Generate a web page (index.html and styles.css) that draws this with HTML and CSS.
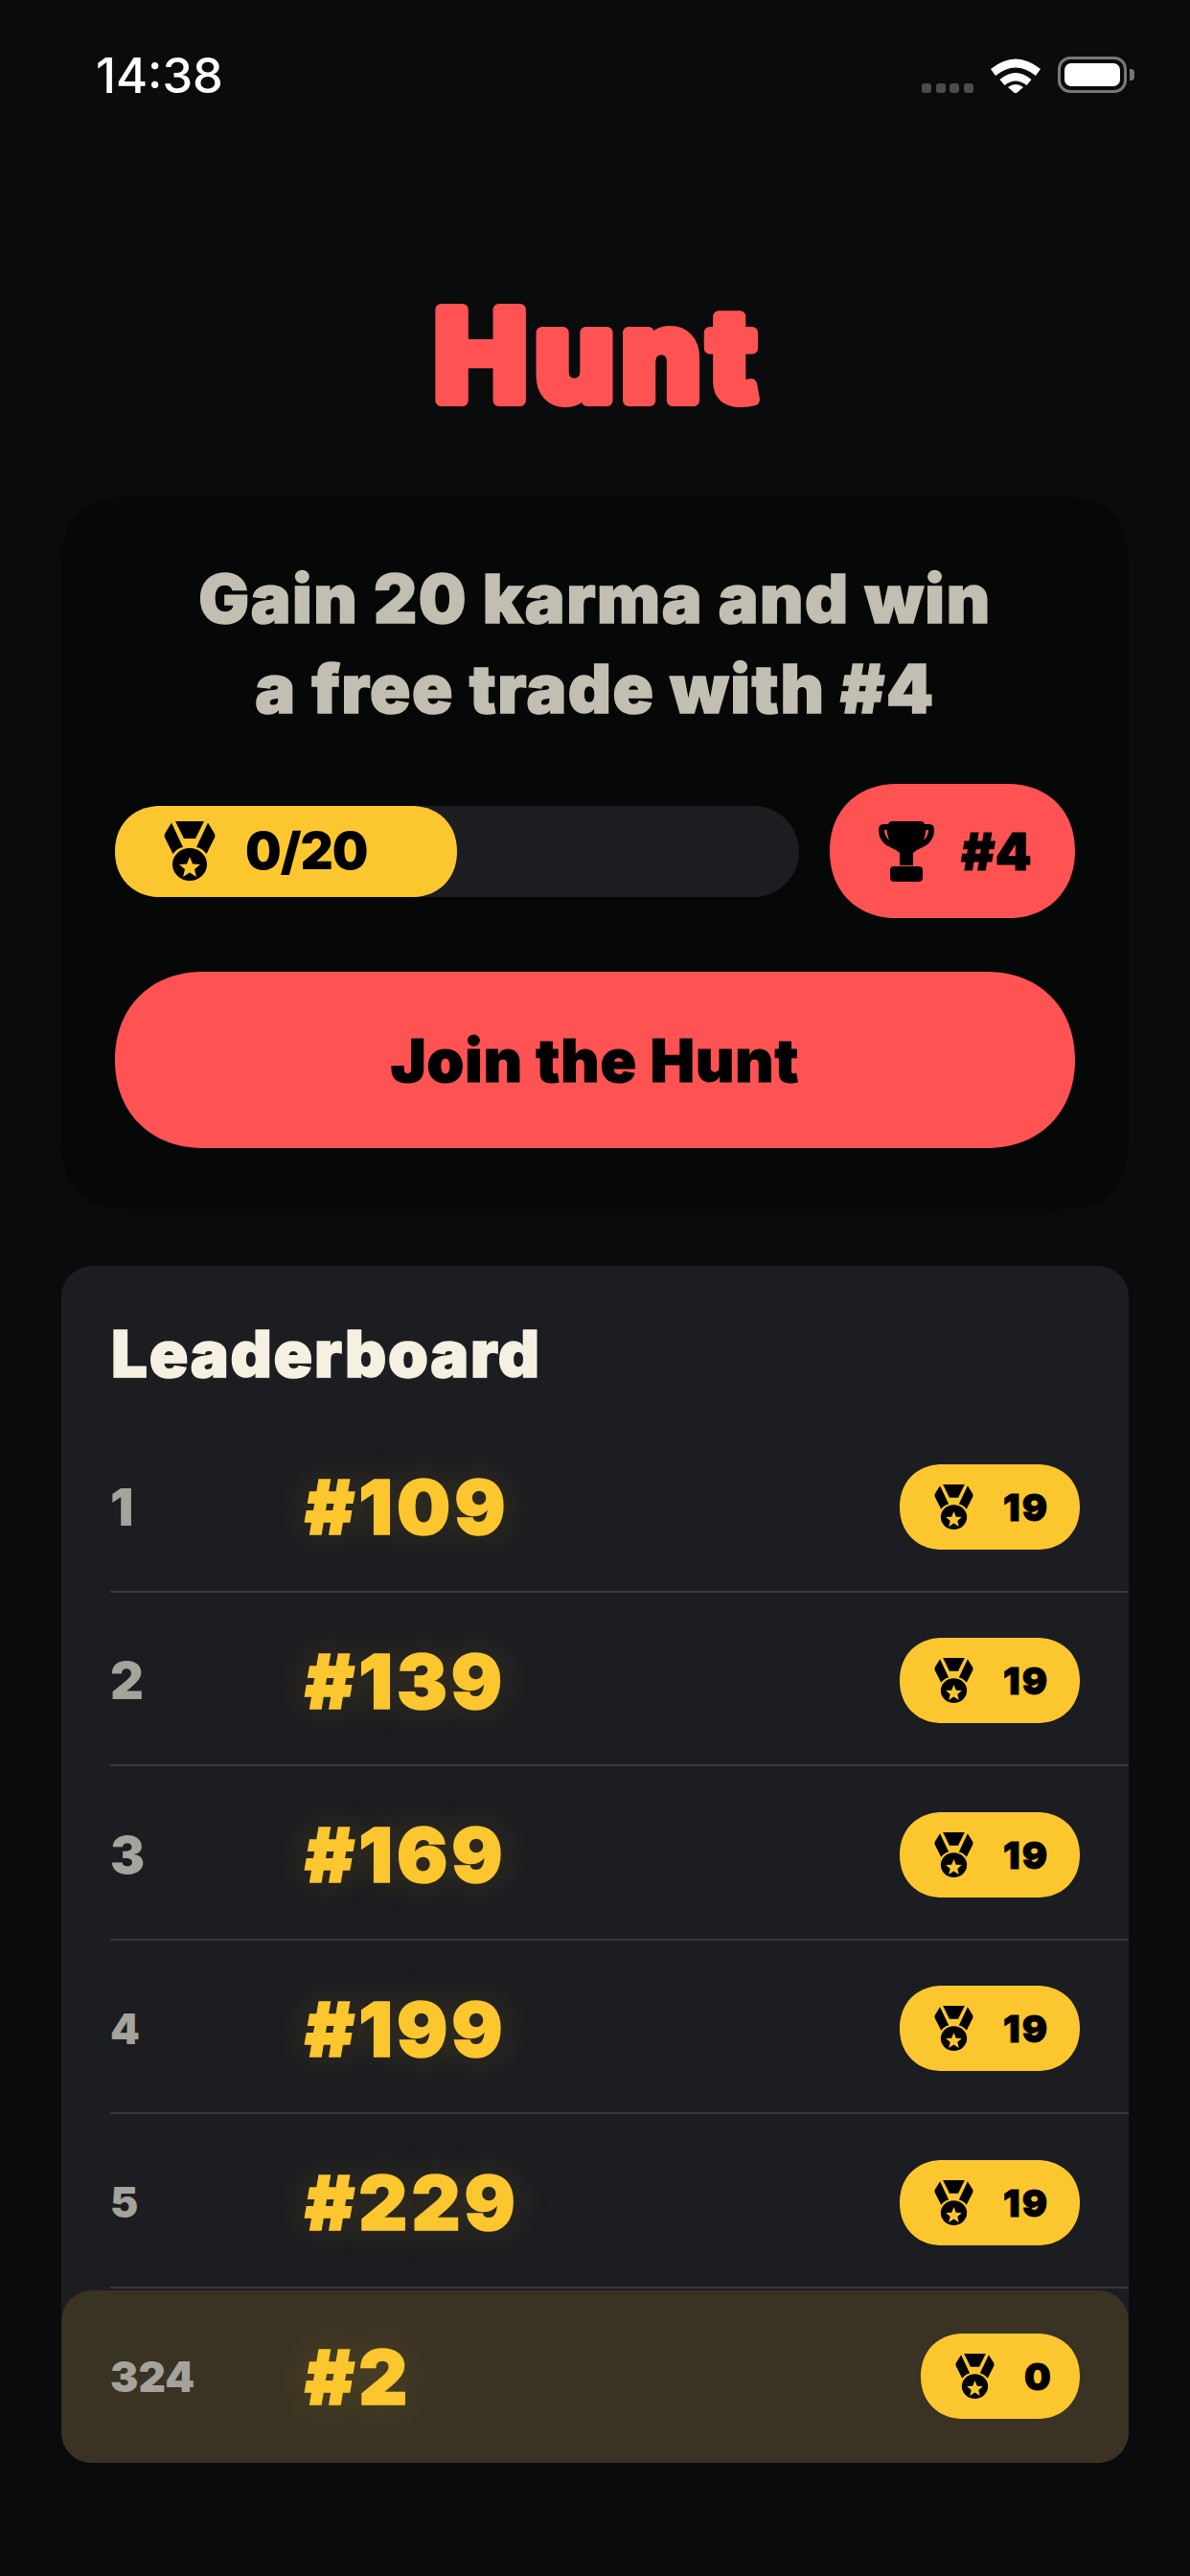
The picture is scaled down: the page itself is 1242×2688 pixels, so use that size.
FILE: index.html
```html
<!DOCTYPE html>
<html lang="en">
<head>
<meta charset="utf-8">
<title>Hunt</title>
<link rel="stylesheet" href="styles.css">
</head>
<body>
<svg class="defs" width="0" height="0" aria-hidden="true">
  <symbol id="medal" viewBox="0 0 54 62">
    <path d="M12 0H42L33 18H21Z"/>
    <path d="M8 1.500L20 27Q14 28 9.500 34L1 17Q0 15 1 13Z"/>
    <path d="M46 1.500L34 27Q40 28 44.500 34L53 17Q54 15 53 13Z"/>
    <path fill-rule="evenodd" d="M27 28A18 17 0 1 1 27 62A18 17 0 1 1 27 28ZM27 37L24 44.500L16 45L22 50L20 58L27 53.500L34 58L32 50L38 45L30 44.500Z"/>
  </symbol>
  <symbol id="trophy" viewBox="0 0 58 63">
    <path fill-rule="evenodd" d="M14 0H44Q47 0 48 3H53Q58 3 58 9Q58 19 50 25L40 30Q37 32 36 33V46H22V33Q21 32 18 30L8 25Q0 19 0 9Q0 3 5 3H10Q11 0 14 0ZM6 9Q6 15 11 20Q9 14 8.500 9ZM52 9H49.500Q49 14 47 20Q52 15 52 9Z"/>
    <rect x="12" y="47" width="34" height="16" rx="4"/>
  </symbol>
</svg>
<main class="screen">
  <header class="status">
    <span class="clock">14:38</span>
    <div class="status-icons">
      <span class="signal"><i></i><i></i><i></i><i></i></span>
      <svg class="wifi" viewBox="0 0 52 38"><path d="M0 13Q26 -8 52 13L47 20Q26 3 5 20Z"/><path d="M9.500 24Q26 10 42.500 24L37.500 30Q26 21 14.500 30Z"/><path d="M18 32Q26 26 34 32L26 39Z"/></svg>
      <span class="battery"><span class="battery-fill"></span></span>
      <span class="battery-tip"></span>
    </div>
  </header>

  <h1 class="title"><svg class="title-art" viewBox="0 0 1242 358" role="img"><text x="625" y="258" class="title-text">Hunt</text></svg></h1>

  <section class="promo">
    <h2 class="promo-text">Gain 20 karma and win<br>a free trade with #4</h2>
    <div class="progress-row">
      <div class="track">
        <div class="fill">
          <svg class="icon-medal-lg"><use href="#medal"/></svg>
          <span class="fill-label">0/20</span>
        </div>
      </div>
      <div class="prize">
        <svg class="icon-trophy"><use href="#trophy"/></svg>
        <span class="prize-label">#4</span>
      </div>
    </div>
    <button class="join">Join the Hunt</button>
  </section>

  <section class="board">
    <h2 class="board-title">Leaderboard</h2>
    <ul class="rows">
      <li class="row"><span class="rank rank-lg">1</span><span class="code">#109</span><span class="score"><svg class="icon-medal"><use href="#medal"/></svg><b class="score-value">19</b></span></li>
      <li class="row"><span class="rank rank-lg">2</span><span class="code">#139</span><span class="score"><svg class="icon-medal"><use href="#medal"/></svg><b class="score-value">19</b></span></li>
      <li class="row"><span class="rank rank-lg">3</span><span class="code">#169</span><span class="score"><svg class="icon-medal"><use href="#medal"/></svg><b class="score-value">19</b></span></li>
      <li class="row"><span class="rank">4</span><span class="code">#199</span><span class="score"><svg class="icon-medal"><use href="#medal"/></svg><b class="score-value">19</b></span></li>
      <li class="row"><span class="rank">5</span><span class="code">#229</span><span class="score"><svg class="icon-medal"><use href="#medal"/></svg><b class="score-value">19</b></span></li>
    </ul>
    <div class="me">
      <span class="rank">324</span><span class="code">#2</span><span class="score score-me"><svg class="icon-medal"><use href="#medal"/></svg><b class="score-value">0</b></span>
    </div>
  </section>
</main>
</body>
</html>
```
FILE: styles.css
```css
* { box-sizing: border-box; }
html, body { margin: 0; padding: 0; background: #0a0b0d; }
body { width: 1242px; height: 2688px; overflow: hidden; font-family: Inter, "Liberation Sans", sans-serif; }
.defs { position: absolute; }
.screen { display: flex; flex-direction: column; align-items: center; }

.status { width: 100%; height: 160px; padding: 53px 58px 0 100px; display: flex; justify-content: space-between; align-items: flex-start; }
.clock { color: #fff; font-size: 50.500px; line-height: 52px; font-weight: 500; }
.status-icons { display: flex; align-items: flex-end; margin-top: 6px; height: 38px; }
.signal { display: flex; gap: 4.600px; margin-right: 18px; }
.signal i { width: 10px; height: 10px; border-radius: 3px; background: #4a4b4d; }
.wifi { width: 52px; height: 38px; fill: #fff; margin-right: 18px; }
.battery { width: 72px; height: 38px; border: 3px solid #77787a; border-radius: 13px; padding: 4px; display: block; }
.battery-fill { display: block; width: 100%; height: 100%; background: #fff; border-radius: 7px; }
.battery-tip { width: 5px; height: 12px; background: #77787a; border-radius: 0 4px 4px 0; margin: 0 0 13px 3px; }

.title { margin: 0; width: 1242px; height: 358px; }
.title-art { display: block; width: 1242px; height: 358px; }
.title-text { font-family: Inter, sans-serif; font-size: 130px; font-weight: 800; letter-spacing: 8px; text-anchor: middle; fill: #ff5353; stroke: #ff5353; stroke-width: 12px; stroke-linejoin: round; }

.promo { width: 1114px; height: 744px; background: #060808; border-radius: 80px; padding: 60px 56px 0; display: flex; flex-direction: column; align-items: stretch; corner-shape: superellipse(1.5); }
.promo-text { margin: 0; text-align: center; color: #c2bfb2; font-size: 70px; line-height: 94px; font-weight: 900; letter-spacing: 1.600px; -webkit-text-stroke: 1.500px #c2bfb2; }
.progress-row { display: flex; align-items: center; margin-top: 52px; gap: 32px; }
.track { flex: 1; height: 95px; background: #1c1d21; border-radius: 48px; }
.fill { width: 357px; height: 95px; background: #fcc72e; border-radius: 48px; display: flex; align-items: center; padding-left: 51px; gap: 31px; corner-shape: superellipse(1.1); }
.icon-medal-lg { width: 54px; height: 62px; fill: #000; }
.fill-label { font-size: 53px; font-weight: 900; letter-spacing: -1px; color: #000; }
.prize { width: 256px; height: 140px; background: #ff5353; border-radius: 70px; display: flex; align-items: center; padding-left: 51px; gap: 28px; corner-shape: superellipse(1.1); }
.icon-trophy { width: 58px; height: 63px; fill: #000; }
.prize-label { font-size: 54px; font-weight: 900; color: #000; -webkit-text-stroke: 1px #000; }
.join { display: block; border: 0; margin-top: 56px; height: 184px; border-radius: 92px; background: #ff5353; color: #000; font: 900 62px Inter, sans-serif; letter-spacing: 1px; -webkit-text-stroke: 1px #000; corner-shape: superellipse(1.1); }

.board { width: 1114px; margin-top: 59px; background: #1c1d21; border-radius: 32px; }
.board-title { margin: 0; height: 159px; padding: 50px 0 0 52px; color: #f5f0e1; font-size: 67px; line-height: 84px; font-weight: 900; letter-spacing: 1.800px; -webkit-text-stroke: 1.500px #f5f0e1; }
.rows { list-style: none; margin: 0; padding: 0; }
.row { height: 181.500px; margin-left: 51px; padding: 5px 51px 0 0; display: flex; align-items: center; border-bottom: 2px solid #37383d; }
.rank { width: 203px; color: #a5a39b; font-size: 44px; font-weight: 900; }
.rank-lg { font-size: 54px; }
.code { flex: 1; color: #fcc72e; font-size: 79px; font-weight: 900; letter-spacing: 4px; -webkit-text-stroke: 1.500px #fcc72e; text-shadow: 0 0 40px rgba(252, 199, 46, .16); }
.score { width: 188px; height: 89px; border-radius: 45px; background: #fcc72e; display: flex; align-items: center; padding-left: 36px; corner-shape: superellipse(1.1); }
.score-me { width: 166px; }
.icon-medal { width: 41px; height: 47px; fill: #000; }
.score-value { margin-left: 31px; color: #000; font-size: 39px; font-weight: 900; letter-spacing: 2px; -webkit-text-stroke: 1px #000; }
.me { height: 180px; margin-top: 2px; padding: 0 51px; background: #3a3323; border-radius: 32px; display: flex; align-items: center; }
```
